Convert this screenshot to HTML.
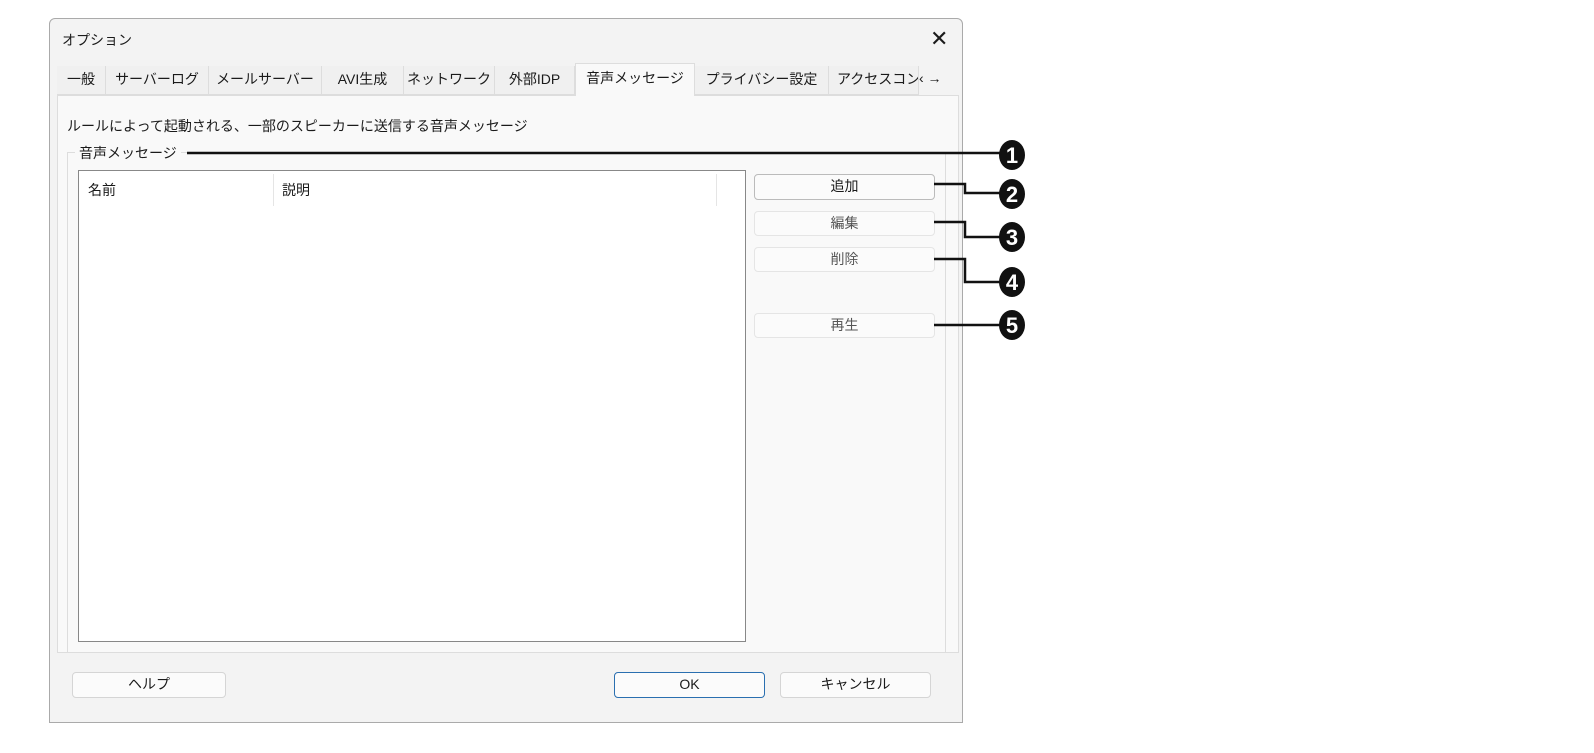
<!DOCTYPE html>
<html><head><meta charset="utf-8"><style>
body{margin:0;width:1594px;height:753px;background:#fff;font-family:"Liberation Sans","Noto Sans CJK JP",sans-serif;font-size:14px;color:#1a1a1a;position:relative;overflow:hidden}
.a{position:absolute;box-sizing:border-box}
.dlg{left:49px;top:18px;width:914px;height:705px;background:#f3f3f3;border:1px solid #aaa;border-radius:6px 6px 0 0}
.tab{top:66px;height:29px;border-right:1px solid #ddd;line-height:27px;text-align:center;font-size:14px;background:#f0f0f0;border-bottom:1px solid #ddd;white-space:nowrap;overflow:hidden}
.btn{background:#fbfbfb;border:1px solid #d5d5d5;border-radius:4px;text-align:center;font-size:14px;line-height:22px}
.g{color:#555}
</style></head><body>
<div class="a dlg"></div>
<div class="a" style="left:62px;top:30px;font-size:14px">オプション</div>
<div class="a" style="left:930px;top:26px;font-size:22px;line-height:26px">✕</div>
<div class="a" style="left:57px;top:95px;width:902px;height:558px;border:1px solid #ddd;background:#f9f9f9"></div>
<div class="a tab" style="left:57px;width:49px">一般</div>
<div class="a tab" style="left:106px;width:103px">サーバーログ</div>
<div class="a tab" style="left:209px;width:113px">メールサーバー</div>
<div class="a tab" style="left:322px;width:82px">AVI生成</div>
<div class="a tab" style="left:404px;width:91px">ネットワーク</div>
<div class="a tab" style="left:495px;width:80px">外部IDP</div>
<div class="a tab" style="left:575px;width:120px;top:63px;height:33px;background:#f9f9f9;border:1px solid #ddd;border-bottom:none;line-height:28px">音声メッセージ</div>
<div class="a tab" style="left:695px;width:134px">プライバシー設定</div>
<div class="a tab" style="left:829px;width:90px;text-align:left;padding-left:8px">アクセスコン</div>
<div class="a" style="left:919px;top:70px;font-size:14px;background:#f3f3f3">‹&nbsp;→</div>
<div class="a" style="left:67px;top:116px;font-size:14px">ルールによって起動される、一部のスピーカーに送信する音声メッセージ</div>
<div class="a" style="left:67px;top:152px;width:879px;height:501px;border:1px solid #ddd;border-bottom:none"></div>
<div class="a" style="left:75px;top:143px;background:#f9f9f9;padding:0 4px;font-size:14px">音声メッセージ</div>
<div class="a" style="left:78px;top:170px;width:668px;height:472px;background:#fff;border:1px solid #888"></div>
<div class="a" style="left:88px;top:180px;font-size:14px">名前</div>
<div class="a" style="left:273px;top:174px;width:1px;height:32px;background:#e5e5e5"></div>
<div class="a" style="left:282px;top:180px;font-size:14px">説明</div>
<div class="a" style="left:716px;top:174px;width:1px;height:32px;background:#e5e5e5"></div>
<div class="a btn" style="left:754px;top:174px;width:181px;height:26px;border-color:#bbb">追加</div>
<div class="a btn g" style="left:754px;top:211px;width:181px;height:25px;border-color:#e5e5e5">編集</div>
<div class="a btn g" style="left:754px;top:247px;width:181px;height:25px;border-color:#e5e5e5">削除</div>
<div class="a btn g" style="left:754px;top:313px;width:181px;height:25px;border-color:#e5e5e5">再生</div>
<div class="a btn" style="left:72px;top:672px;width:154px;height:26px">ヘルプ</div>
<div class="a btn" style="left:614px;top:672px;width:151px;height:26px;border-color:#2a6fb0">OK</div>
<div class="a btn" style="left:780px;top:672px;width:151px;height:26px">キャンセル</div>
<svg class="a" style="left:0;top:0" width="1594" height="753">
<g stroke="#111" stroke-width="2.5" fill="none">
<path d="M187 153H1000"/>
<path d="M934 184H965V193H1000"/>
<path d="M934 222H965V237H1000"/>
<path d="M934 259H965V282H1000"/>
<path d="M934 325H1000"/>
</g>
<g fill="#111"><ellipse cx="1012" cy="155" rx="13" ry="15"/><ellipse cx="1012" cy="194" rx="13" ry="15"/><ellipse cx="1012" cy="237" rx="13" ry="15"/><ellipse cx="1012" cy="282" rx="13" ry="15"/><ellipse cx="1012" cy="325" rx="13" ry="15"/></g>
<g fill="#fff" font-family="Liberation Sans" font-weight="bold" font-size="22" text-anchor="middle"><text x="1012" y="163">1</text><text x="1012" y="202">2</text><text x="1012" y="245">3</text><text x="1012" y="290">4</text><text x="1012" y="333">5</text></g>
</svg>
</body></html>
